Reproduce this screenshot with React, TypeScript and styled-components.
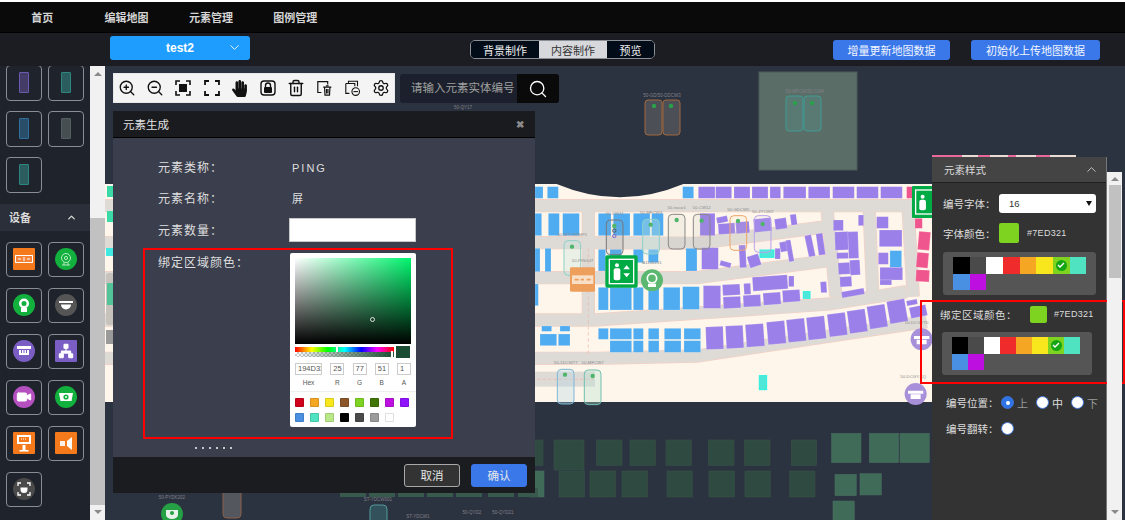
import { FC, ReactNode } from 'react';
import styled, { createGlobalStyle } from 'styled-components';
import { ChevronDown, ChevronUp, Search, Settings, Trash2, ZoomIn, ZoomOut, Network, Video } from 'lucide-react';
import { FaHandPaper } from 'react-icons/fa';

const GlobalStyle = createGlobalStyle`
    html, body {
        margin: 0;
        padding: 0;
        background: #fff;
        font-family: "Liberation Sans", "Noto Sans CJK SC", sans-serif;
    }
    * { box-sizing: border-box; }
`;

const Page = styled.div`
    width: 1125px;
    height: 520px;
    overflow: hidden;
    display: flex;
    flex-direction: column;
    border-top: 2px solid #fff;
`;

const TopNav = styled.nav`
    height: 31px;
    flex: none;
    display: flex;
    align-items: center;
    background: #0a0a0a;
    border-bottom: 1px solid #000;
`;

const NavItem = styled.div`
    width: 84.4px;
    text-align: center;
    font-size: 11px;
    font-weight: 700;
    color: #d4d4d4;
`;

const SubBar = styled.div`
    height: 33px;
    flex: none;
    display: flex;
    align-items: center;
    padding-left: 110px;
    background: #1b1d22;
`;

const MapSelect = styled.div`
    width: 140px;
    height: 24px;
    display: flex;
    align-items: center;
    justify-content: center;
    position: relative;
    margin-top: -3px;
    border-radius: 3px;
    background: #1e9dff;
    color: #fff;
    font-size: 12px;
    font-weight: 700;

    svg {
        position: absolute;
        right: 8px;
        top: 4px;
    }
`;

const ModeTabs = styled.div`
    display: flex;
    height: 19px;
    margin-left: 220px;
    border: 1px solid #8b8f96;
    border-radius: 5px;
    overflow: hidden;
`;

const ModeTab = styled.div<{ $active?: boolean; $width: number }>`
    width: ${p => p.$width}px;
    display: flex;
    align-items: center;
    justify-content: center;
    font-size: 11px;
    background: ${p => (p.$active ? '#d6d8dc' : '#020b18')};
    color: ${p => (p.$active ? '#333' : '#f0f0f0')};
`;

const BlueButton = styled.button<{ $width: number; $gap: number }>`
    width: ${p => p.$width}px;
    height: 20px;
    margin-left: ${p => p.$gap}px;
    padding: 0;
    border: 0;
    border-radius: 3px;
    background: #3a78ea;
    color: #f2f6ff;
    font-family: inherit;
    font-size: 11px;
`;

const Main = styled.div`
    flex: 1;
    min-height: 0;
    display: flex;
`;

const Sidebar = styled.aside`
    width: 90px;
    flex: none;
    overflow: hidden;
    background: #1f232c;
`;

const TileGrid = styled.div<{ $top: number }>`
    display: grid;
    grid-template-columns: 36px 36px;
    gap: 10.5px 6px;
    padding-left: 6px;
    margin-top: ${p => p.$top}px;
`;

const Tile = styled.div`
    width: 36px;
    height: 35.5px;
    display: flex;
    align-items: center;
    justify-content: center;
    border: 1px solid #8a8d93;
    border-radius: 4px;
`;

const PhoneChip = styled.div<{ $fill: string; $line: string }>`
    width: 10px;
    height: 21px;
    border-radius: 1px;
    background: ${p => p.$fill};
    border: 1px solid ${p => p.$line};
`;

const SideHeading = styled.div`
    height: 27px;
    margin-top: 11px;
    display: flex;
    align-items: center;
    justify-content: space-between;
    padding: 0 13px 0 9px;
    background: #2b2f3a;
    color: #d8d8d8;
    font-size: 11px;
    font-weight: 700;
`;

const Badge = styled.div<{ $color: string; $round?: boolean }>`
    width: 22px;
    height: 22px;
    display: flex;
    align-items: center;
    justify-content: center;
    background: ${p => p.$color};
    border-radius: ${p => (p.$round ? '50%' : '1px')};
`;

const ScrollTrack = styled.div<{ $width: number }>`
    width: ${p => p.$width}px;
    flex: none;
    display: flex;
    flex-direction: column;
    align-items: center;
    background: #f1f1f1;
`;

const ScrollArrow = styled.div<{ $down?: boolean }>`
    width: 0;
    height: 0;
    flex: none;
    border-left: 4px solid transparent;
    border-right: 4px solid transparent;
    ${p => (p.$down ? 'border-top: 4px solid #8a8a8a;' : 'border-bottom: 4px solid #8a8a8a;')}
`;

const ScrollThumb = styled.div<{ $height: number; $top: number }>`
    width: 100%;
    height: ${p => p.$height}px;
    margin-top: ${p => p.$top}px;
    flex: none;
    background: #c1c1c1;
`;

const Stage = styled.main`
    flex: 1;
    position: relative;
    overflow: hidden;
    background: #2c3340;
`;

const MapSvg = styled.svg`
    position: absolute;
    inset: 0;
    display: block;
`;

const Toolbar = styled.div`
    position: absolute;
    left: 8px;
    top: 7px;
    width: 282px;
    height: 30px;
    display: flex;
    align-items: center;
    justify-content: space-between;
    padding: 0 4px;
    background: #f4f4f4;
    border: 1px solid #e8e8e8;
    color: #111;
`;

const ToolIcon = styled.div`
    width: 18px;
    height: 18px;
    display: flex;
    align-items: center;
    justify-content: center;
`;

const SearchBox = styled.div`
    position: absolute;
    left: 295px;
    top: 8px;
    width: 159px;
    height: 29px;
    display: flex;
    border-radius: 3px;
    overflow: hidden;
    background: #1b202c;
`;

const SearchText = styled.div`
    flex: 1;
    padding-left: 11px;
    line-height: 29px;
    font-size: 11.5px;
    color: #a0a0a0;
    white-space: nowrap;
`;

const SearchButton = styled.div`
    width: 42px;
    display: flex;
    align-items: center;
    justify-content: center;
    background: #0a0a0a;
    color: #fff;
`;

const Modal = styled.section`
    position: absolute;
    left: 8px;
    top: 45px;
    width: 422px;
    height: 382px;
    display: flex;
    flex-direction: column;
    background: #3b3f4d;
`;

const ModalHead = styled.header`
    height: 27px;
    flex: none;
    display: flex;
    align-items: center;
    justify-content: space-between;
    padding: 0 11px 0 10px;
    background: #1a1b1e;
    border-bottom: 1px solid #000;
    color: #e2e2e2;
    font-size: 11.5px;
`;

const CloseMark = styled.span`
    color: #8a8a8a;
    font-size: 10px;
    font-weight: 700;
`;

const ModalBody = styled.div`
    flex: 1;
    min-height: 0;
    overflow: hidden;
    padding: 20px 0 0 45px;
    display: flex;
    flex-direction: column;
`;

const FormRow = styled.div<{ $height: number }>`
    display: flex;
    height: ${p => p.$height}px;
    flex: none;
    color: #dedede;
    font-size: 12px;
    letter-spacing: 1px;
    line-height: 20px;
`;

const FormLabel = styled.div`
    width: 131px;
    flex: none;
`;

const FormValue = styled.div`
    padding-left: 3px;
    font-size: 11px;
    letter-spacing: 2px;
`;

const TextField = styled.div`
    width: 127px;
    height: 24px;
    margin-top: -3px;
    background: #fff;
    border: 1px solid #c9c9c9;
`;

const Picker = styled.div`
    width: 126px;
    height: 174px;
    margin: 0 0 0 1px;
    padding: 5px;
    display: flex;
    flex-direction: column;
    background: #fff;
    border-radius: 2px;
    letter-spacing: 0;
    color: #333;
`;

const SatPanel = styled.div`
    height: 86px;
    flex: none;
    position: relative;
    background: linear-gradient(to top, #000, transparent), linear-gradient(to right, #fff, #00f56e);
`;

const SatDot = styled.div`
    position: absolute;
    left: 75px;
    top: 59px;
    width: 5px;
    height: 5px;
    border: 1px solid #ddd;
    border-radius: 50%;
`;

const SliderRow = styled.div`
    display: flex;
    gap: 2px;
    margin-top: 2px;
    height: 14px;
`;

const Sliders = styled.div`
    width: 99px;
    display: flex;
    flex-direction: column;
    justify-content: space-between;
    padding: 1px 0;
`;

const HueBar = styled.div`
    height: 5px;
    position: relative;
    background: linear-gradient(to right, #f00, #ff0 17%, #0f0 33%, #0ff 50%, #00f 67%, #f0f 83%, #f00);
`;

const SliderKnob = styled.div<{ $left: string }>`
    position: absolute;
    left: ${p => p.$left};
    top: -1px;
    width: 2px;
    height: 7px;
    background: #fff;
    box-shadow: 0 0 1px #888;
`;

const AlphaBar = styled.div`
    height: 5px;
    position: relative;
    background:
        linear-gradient(to right, rgba(26, 77, 51, 0), #1a4d33),
        repeating-conic-gradient(#ccc 0 25%, #fff 0 50%) 0 0 / 4px 4px;
`;

const ColorPreview = styled.div`
    width: 14px;
    background: #1a4d33;
`;

const ValueGrid = styled.div`
    display: grid;
    grid-template-columns: 27px 14px 14px 14px 14px;
    column-gap: 6px;
    justify-content: space-between;
    margin-top: 5px;
`;

const ValueCell = styled.div`
    display: flex;
    flex-direction: column;
    align-items: center;
    color: #555;
`;

const ValueInput = styled.div`
    width: 100%;
    height: 12px;
    padding-left: 2px;
    border: 1px solid #ccc;
    font-size: 7.5px;
    line-height: 10px;
    overflow: hidden;
`;

const ValueName = styled.div`
    margin-top: 3px;
    height: 10px;
    font-size: 6.5px;
    line-height: 10px;
`;

const PresetWrap = styled.div`
    margin: 3px -5px 0;
    padding: 6px 5px 0;
    border-top: 1px solid #eee;
    display: grid;
    grid-template-columns: repeat(8, 9px);
    gap: 6px;
`;

const Preset = styled.div<{ $color: string }>`
    width: 9px;
    height: 9px;
    border-radius: 1px;
    background: ${p => p.$color};
    box-shadow: inset 0 0 0 1px rgba(0, 0, 0, 0.12);
`;

// only the last pixels of a form row peek out above the footer in the reference
const PeekLine = styled.div`
    width: 40px;
    height: 2px;
    flex: none;
    margin: 4px 0 0 37px;
    background: repeating-linear-gradient(to right, #c8c8cc 0 2px, transparent 2px 7px);
`;

const ModalFoot = styled.footer`
    height: 36px;
    flex: none;
    display: flex;
    align-items: center;
    justify-content: flex-end;
    gap: 11px;
    padding-right: 8px;
    background: #1b1c20;
`;

const FootButton = styled.button<{ $primary?: boolean }>`
    width: 56px;
    height: 23px;
    padding: 0;
    border-radius: 3px;
    border: 1px solid ${p => (p.$primary ? '#3a78ea' : '#a8a8a8')};
    background: ${p => (p.$primary ? '#3a78ea' : '#333')};
    color: #e8e8e8;
    font-family: inherit;
    font-size: 11.5px;
`;

const MarkBox = styled.div<{ $left: number; $top: number; $width: number; $height: number }>`
    position: absolute;
    left: ${p => p.$left}px;
    top: ${p => p.$top}px;
    width: ${p => p.$width}px;
    height: ${p => p.$height}px;
    border: 2px solid #f00;
`;

const StylePanel = styled.aside`
    position: absolute;
    left: 827px;
    top: 91px;
    width: 175px;
    bottom: 0;
    background: #333;
    border-right: 1px solid #777;
    color: #ddd;
`;

const PanelHead = styled.header`
    height: 26px;
    display: flex;
    align-items: center;
    justify-content: space-between;
    padding: 0 7px 0 12px;
    background: #444;
    border-bottom: 1px solid #1f1f1f;
    font-size: 10.5px;
`;

const PanelSection = styled.div<{ $left: number; $top: number }>`
    padding: ${p => p.$top}px 10px 0 ${p => p.$left}px;
`;

const PanelRow = styled.div<{ $height?: number; $above?: number }>`
    display: flex;
    align-items: center;
    height: ${p => p.$height ?? 20}px;
    margin-top: ${p => p.$above ?? 0}px;
    font-size: 10.5px;
`;

const RowLabel = styled.div<{ $width: number; $track?: number }>`
    width: ${p => p.$width}px;
    flex: none;
    white-space: nowrap;
    letter-spacing: ${p => p.$track ?? 0}px;
`;

const SelectBox = styled.div`
    width: 97px;
    height: 19px;
    display: flex;
    align-items: center;
    justify-content: space-between;
    padding: 0 4px 0 10px;
    border-radius: 3px;
    background: #fff;
    color: #333;
    font-size: 9.5px;
`;

const SelectCaret = styled.div`
    width: 0;
    height: 0;
    border-left: 3.5px solid transparent;
    border-right: 3.5px solid transparent;
    border-top: 5px solid #111;
`;

const Swatch = styled.div<{ $size: number }>`
    width: ${p => p.$size}px;
    height: ${p => p.$size}px;
    flex: none;
    background: #7ed321;
    border-radius: 2px;
`;

const HexText = styled.div<{ $gap: number }>`
    margin-left: ${p => p.$gap}px;
    font-size: 9px;
    letter-spacing: 0.3px;
`;

const Palette = styled.div<{ $cell: number; $width: number; $shift: number }>`
    width: ${p => p.$width}px;
    height: 43px;
    margin: 9px 0 0 ${p => p.$shift}px;
    padding: 5px 10px;
    display: grid;
    grid-template-columns: repeat(8, ${p => p.$cell}px);
    grid-auto-rows: 16.5px;
    border-radius: 3px;
    background: #555;
`;

const PaletteCell = styled.div<{ $color: string }>`
    display: flex;
    align-items: center;
    justify-content: center;
    background: ${p => p.$color};
`;

const CheckDot = styled.div`
    width: 11px;
    height: 11px;
    display: flex;
    align-items: center;
    justify-content: center;
    border-radius: 50%;
    background: #14a514;
`;

const RadioDot = styled.div<{ $on?: boolean }>`
    width: 13px;
    height: 13px;
    flex: none;
    border-radius: 50%;
    background: ${p => (p.$on ? '#2f74e6' : '#fff')};
    border: 1px solid #3f73d6;
    display: flex;
    align-items: center;
    justify-content: center;

    &::after {
        content: '';
        width: 4px;
        height: 4px;
        border-radius: 50%;
        background: ${p => (p.$on ? '#fff' : 'transparent')};
    }
`;

const RadioText = styled.span<{ $dim?: boolean; $gap: number }>`
    margin: 0 ${p => p.$gap}px 0 3px;
    font-size: 11px;
    color: ${p => (p.$dim ? '#999' : '#ddd')};
`;

const RightScroll = styled(ScrollTrack)`
    position: absolute;
    left: 1002px;
    top: 106px;
    bottom: 0;
    padding-top: 5px;
    justify-content: flex-start;
`;

const RightThumb = styled(ScrollThumb)`
    width: 12px;
`;

const SideScroll = styled(ScrollTrack)`
    padding-top: 6px;
`;

const ScrollFill = styled.div`
    flex: 1;
`;

const BottomArrow = styled(ScrollArrow)`
    margin-bottom: 6px;
`;

// toolbar glyphs that lucide does not have
const ScanSquare = () => (
    <svg width='18' height='18' viewBox='0 0 18 18' fill='none' stroke='#111' strokeWidth='1.6'>
        <path d='M2 6V2h4M12 2h4v4M16 12v4h-4M6 16H2v-4' />
        <rect x='5' y='5' width='8' height='8' fill='#111' stroke='none' />
    </svg>
);

const FullCorners = () => (
    <svg width='18' height='18' viewBox='0 0 18 18' fill='none' stroke='#111' strokeWidth='1.8'>
        <path d='M2 6V2h4M12 2h4v4M16 12v4h-4M6 16H2v-4' />
    </svg>
);

const LockBox = () => (
    <svg width='18' height='18' viewBox='0 0 18 18' fill='none' stroke='#111' strokeWidth='1.4'>
        <rect x='2' y='2' width='14' height='14' rx='3' />
        <path d='M6.5 8V6.5a2.5 2.5 0 015 0V8' />
        <rect x='5' y='8' width='8' height='6' fill='#111' stroke='none' rx='1' />
    </svg>
);

const PageTrash = () => (
    <svg width='20' height='18' viewBox='0 0 20 18' fill='none' stroke='#111' strokeWidth='1.3'>
        <path d='M6 14H2V2h11v3' />
        <path d='M8 8h9M9.5 8l.5 9h5l.5-9M11 6.5h3M11.7 10v5M13.3 10v5' />
    </svg>
);

const PageMinus = () => (
    <svg width='20' height='18' viewBox='0 0 20 18' fill='none' stroke='#111' strokeWidth='1.2'>
        <path d='M5 4V1.5h10V7M2 4h10v3M2 4v11h4' />
        <circle cx='13' cy='13' r='4.2' />
        <path d='M10.5 13h5' />
    </svg>
);

const W = '#fff';

const deviceIcons: ReactNode[] = [
    <Badge $color='#f47a1c' key='card'>
        <svg width='22' height='22' viewBox='0 0 22 22' fill='none' stroke={W} strokeWidth='1'>
            <rect x='2.5' y='7.5' width='17' height='7' fill='#fbd' fillOpacity='0.15' />
            <path d='M5 11h3M10 10h2M10 12h2M14 11h3' />
        </svg>
    </Badge>,
    <Badge $color='#12b03d' $round key='cam1'>
        <svg width='22' height='22' viewBox='0 0 22 22' fill='none' stroke='#c8f0d0' strokeWidth='0.9'>
            <circle cx='11' cy='10' r='4.5' />
            <circle cx='11' cy='10' r='1.6' />
            <path d='M7 17h8M9 14.5v2.5M13 14.5v2.5' />
        </svg>
    </Badge>,
    <Badge $color='#12b03d' $round key='cam2'>
        <svg width='22' height='22' viewBox='0 0 22 22' fill={W}>
            <circle cx='11' cy='9.5' r='5' />
            <circle cx='11' cy='9.5' r='2.5' fill='#12b03d' />
            <rect x='8' y='14' width='6' height='4' />
        </svg>
    </Badge>,
    <Badge $color='#555' $round key='dome'>
        <svg width='22' height='22' viewBox='0 0 22 22' fill={W}>
            <rect x='4' y='7' width='14' height='2' />
            <path d='M6 10.5h10a5 5 0 01-10 0z' />
        </svg>
    </Badge>,
    <Badge $color='#7a5ec4' $round key='store'>
        <svg width='22' height='22' viewBox='0 0 22 22' fill={W}>
            <rect x='4' y='6' width='14' height='3' />
            <path d='M6 10h10v5H6z' />
            <path d='M8.5 10v3M11 10v3M13.5 10v3' stroke='#7a5ec4' />
        </svg>
    </Badge>,
    <Badge $color='#7a5ec4' key='network'>
        <Network size={16} color={W} fill={W} strokeWidth={1.6} />
    </Badge>,
    <Badge $color='#b550c0' $round key='video'>
        <Video size={16} color={W} fill={W} strokeWidth={1.5} />
    </Badge>,
    <Badge $color='#12b03d' $round key='cam3'>
        <svg width='22' height='22' viewBox='0 0 22 22' fill={W}>
            <path d='M4 7h14l-1.5 8h-11z' />
            <circle cx='11' cy='11' r='2.6' fill='#12b03d' />
            <circle cx='11' cy='11' r='1' />
        </svg>
    </Badge>,
    <Badge $color='#f47a1c' key='kiosk'>
        <svg width='22' height='22' viewBox='0 0 22 22' fill={W}>
            <path d='M4 3h14v9H4z' />
            <rect x='6' y='5' width='10' height='5' fill='#f47a1c' />
            <path d='M8 7h6' stroke={W} strokeDasharray='1 1' />
            <rect x='9.5' y='13' width='3' height='5' />
            <rect x='6.5' y='18' width='9' height='1.5' />
        </svg>
    </Badge>,
    <Badge $color='#f47a1c' key='speaker'>
        <svg width='22' height='22' viewBox='0 0 22 22' fill={W}>
            <rect x='5' y='9' width='5' height='5' opacity='0.9' />
            <path d='M12 9l5-4v13l-5-4z' />
        </svg>
    </Badge>,
    <Badge $color='#4a4a4a' $round key='scan'>
        <svg width='22' height='22' viewBox='0 0 22 22' fill='none' stroke={W} strokeWidth='1.3'>
            <path d='M5 8V5h3M14 5h3v3M17 14v3h-3M8 17H5v-3' />
            <path d='M7.5 9.5h7v2a3.5 3.5 0 01-7 0z' fill={W} stroke='none' />
        </svg>
    </Badge>,
];

type Block = [number, number, number, number, number?];

const blueBlocks: Block[] = [
    [15, 20, 24, 35], [52, 20, 33, 35], [458, 20, 33, 35],
    [15, 100, 20, 67], [55, 100, 33, 67], [98, 100, 50, 67], [205, 100, 38, 67], [250, 100, 50, 67], [310, 100, 50, 67], [365, 100, 35, 67],
    [15, 205, 15, 70], [45, 205, 18, 70], [205, 208, 22, 65], [240, 208, 35, 40], [310, 208, 30, 40], [355, 208, 30, 40], [468, 205, 33, 68],
    [15, 312, 10, 65], [205, 322, 30, 68], [240, 322, 65, 68], [310, 322, 30, 68], [355, 322, 32, 68], [400, 322, 50, 68], [458, 320, 50, 68],
    [205, 445, 30, 33], [240, 445, 65, 33], [310, 445, 30, 33], [355, 445, 32, 33], [403, 445, 50, 33], [462, 445, 50, 33],
    [240, 482, 65, 35], [310, 482, 30, 35], [355, 482, 32, 35], [403, 482, 50, 35], [462, 482, 50, 35],
    [35, 438, 30, 16], [90, 438, 30, 16], [30, 462, 50, 35], [85, 462, 35, 35], [1080, 212, 35, 50],
];

const purpleBlocks: Block[] = [
    [505, 20, 50, 35], [557, 20, 48, 35], [612, 20, 48, 35], [666, 20, 48, 35], [720, 20, 32, 35], [760, 20, 68, 35], [835, 20, 65, 35], [908, 20, 65, 35], [980, 20, 65, 35], [1052, 20, 65, 35],
    [510, 100, 45, 67], [560, 110, 33, 18, -12], [565, 130, 50, 32, -4], [618, 125, 40, 35, -4], [672, 115, 52, 40, -6], [735, 115, 35, 32, -8], [782, 103, 18, 32, -8],
    [515, 203, 50, 65], [570, 245, 33, 15, 15], [628, 195, 20, 68, -3], [655, 225, 35, 35, -18], [735, 205, 16, 32], [750, 185, 25, 30, -10], [772, 180, 15, 65, -10], [830, 165, 20, 65, -12], [862, 160, 20, 65, -8],
    [520, 317, 52, 68], [578, 313, 52, 33, -3], [580, 350, 52, 35, -3], [642, 310, 20, 33, -3], [640, 345, 52, 35, -3], [668, 288, 105, 42, -4], [776, 288, 16, 32], [700, 338, 52, 36, -4], [758, 330, 52, 36, -4], [872, 305, 18, 33, -4],
    [910, 120, 30, 32], [985, 105, 16, 32], [915, 155, 40, 55, -2], [955, 155, 30, 80, -2], [920, 218, 35, 18, -2], [925, 248, 35, 35, -3], [960, 240, 30, 45, -3], [930, 290, 35, 30, -3], [935, 330, 68, 18, -10],
    [1040, 110, 35, 35], [1048, 150, 68, 50], [1045, 218, 30, 35], [1050, 262, 68, 38], [1050, 300, 35, 15],
    [528, 440, 52, 68, -2], [588, 437, 52, 68, -3], [648, 432, 54, 68, -4], [712, 424, 54, 68, -5], [772, 417, 54, 68, -6], [832, 410, 54, 68, -6], [895, 400, 54, 68, -7], [955, 390, 54, 68, -8], [1015, 376, 54, 68, -9], [1075, 360, 54, 68, -10],
    [1130, 360, 32, 15, -10], [1140, 378, 50, 33, -12],
];

const pinkBlocks: Block[] = [
    [1130, 20, 20, 35], [1155, 115, 22, 30], [1165, 155, 35, 55, 5], [1160, 218, 35, 45, 5], [1158, 270, 40, 35, 3],
];

type Pod = { x: number; y: number; h?: number; line: string; fill: string; dot: [number, number]; label: string; ly: number };

const pods: Pod[] = [
    { x: 229, y: 120, line: '#777', fill: 'rgba(150,150,150,.12)', dot: [253, 138], label: '50-CW11', ly: 105 },
    { x: 338, y: 118, line: '#8fd0c8', fill: 'rgba(190,225,220,.35)', dot: [362, 134], label: '50-MFCW4', ly: 103 },
    { x: 415, y: 103, line: '#888', fill: 'rgba(170,170,170,.12)', dot: [440, 120], label: '50-nxcw1', ly: 88 },
    { x: 490, y: 103, line: '#888', fill: 'rgba(170,170,170,.12)', dot: [515, 122], label: '50-CW12', ly: 88 },
    { x: 600, y: 107, line: '#eda56a', fill: 'rgba(240,220,190,.12)', dot: [624, 123], label: '50-GDCW5', ly: 92 },
    { x: 673, y: 107, h: 110, line: '#b9a0ea', fill: 'rgba(220,210,240,.12)', dot: [698, 132], label: '50-ZYCW2', ly: 100 },
    { x: 102, y: 182, line: '#8fd0c8', fill: 'rgba(190,225,220,.3)', dot: [126, 200], label: '50-MTCW/MP1', ly: 167 },
    { x: 82, y: 568, line: '#7cb8d8', fill: 'rgba(180,215,230,.35)', dot: [105, 584], label: '50-1DCW77', ly: 552 },
    { x: 163, y: 570, line: '#6fc0b0', fill: 'rgba(180,225,210,.35)', dot: [188, 588], label: '50-MFCW7', ly: 553 },
];

const mapLabels: [number, number, string][] = [
    [158, 245, '50-PING37'], [366, 252, 'A1106231'], [1160, 431, '50-DCGYT0'], [1150, 594, '50-DCGY.CQ'],
];

const squaresDark: Block[] = [
    [15, 120, 24, 76], [72, 120, 90, 90], [200, 120, 76, 76], [300, 120, 76, 76], [408, 120, 76, 76], [536, 120, 76, 76], [644, 120, 76, 76], [784, 120, 76, 76],
    [87, 213, 76, 78], [180, 213, 76, 78], [276, 213, 76, 78], [411, 213, 76, 78], [537, 213, 76, 78], [645, 213, 76, 78], [779, 213, 76, 78],
];

const squaresLight: Block[] = [
    [0, 213, 42, 78], [905, 100, 88, 88], [1018, 100, 88, 88], [1110, 100, 88, 88], [915, 223, 64, 64], [990, 221, 64, 64], [909, 303, 64, 60],
];

const roads = [
    'M-1300 77H1210',
    'M-1300 188H195L500 190L890 140',
    'M-1300 293H500L890 243',
    'M-1300 420H195L900 372L1130 335',
    'M-1300 535H195L500 528L1190 425',
    'M175 77V420',
    'M892 95L918 350',
    'M1018 95L1028 335',
    'M1135 95L1150 350',
];

const BlockSet: FC<{ items: Block[]; fill: string; line?: string }> = ({ items, fill, line = 'rgba(255,255,255,.35)' }) => (
    <g fill={fill} stroke={line} strokeWidth='1.5'>
        {items.map(([x, y, w, h, r], i) => (
            <rect
                key={i}
                x={x}
                y={y}
                width={w}
                height={h}
                transform={r ? `rotate(${r} ${x + w / 2} ${y + h / 2})` : undefined}
            />
        ))}
    </g>
);

// the floor plan lies on a free canvas, drawn in page coordinates
const FloorMap = () => (
    <MapSvg width='1020' height='454' viewBox='105 66 1020 454'>
        <rect x='932' y='155' width='144' height='3' fill='#e8dcd4' />
        <g fill='#e8689a'>
            <rect x='932' y='155' width='30' height='3' />
            <rect x='978' y='155' width='12' height='3' />
            <rect x='1008' y='155' width='8' height='3' />
            <rect x='1036' y='155' width='14' height='3' />
        </g>
        <rect x='105' y='184' width='1012' height='218' fill='#fef6ea' />
        <g transform='translate(530 180) scale(0.3333)' fontFamily='"Liberation Sans", sans-serif'>
            <g fill='none'>
                {roads.map(d => (
                    <path key={'e' + d} d={d} stroke='#f6cfc4' strokeWidth='40' />
                ))}
                {roads.map(d => (
                    <path key={d} d={d} stroke='#dedbd6' strokeWidth='36' />
                ))}
            </g>
            <rect x='15' y='575' width='180' height='45' fill='#dedbd6' />
            <path d='M22 598H195' stroke='#f2b0a8' strokeWidth='2' strokeDasharray='10 6' />
            <path d='M175 205V520' stroke='#f2b0a8' strokeWidth='2' strokeDasharray='10 8' />
            <path d='M80 12Q270 92 460 12Z' fill='#2c3340' />
            <BlockSet items={blueBlocks} fill='#50acf0' />
            <BlockSet items={purpleBlocks} fill='#9a80e8' />
            <BlockSet items={pinkBlocks} fill='#f0568e' />
            <g fill='#4fe8d8' stroke='#25f0e0' strokeWidth='3'>
                <rect x='690' y='210' width='42' height='22' />
                <rect x='820' y='335' width='20' height='20' />
                <rect x='688' y='587' width='22' height='42' />
            </g>
            {pods.map(p => (
                <g key={p.label}>
                    <rect x={p.x} y={p.y} width='50' height={p.h ?? 104} rx='12' fill={p.fill} stroke={p.line} strokeWidth='3' />
                    <circle cx={p.dot[0]} cy={p.dot[1]} r='6.5' fill='#4eb56a' />
                    <text x={p.x + 25} y={p.ly} fontSize='13' fill='#8c8c8c' textAnchor='middle'>
                        {p.label}
                    </text>
                </g>
            ))}
            <circle cx='253' cy='152' r='5' fill='none' stroke='#555' strokeWidth='3' />
            <circle cx='253' cy='168' r='5' fill='none' stroke='#7766c8' strokeWidth='3' />
            <rect x='120' y='262' width='75' height='73' rx='4' fill='#ee9f5c' />
            <rect x='126' y='286' width='64' height='26' fill='#f8e0c8' />
            <path d='M134 299h12M152 299h10M170 299h12' stroke='#ee9f5c' strokeWidth='5' />
            <rect x='226' y='226' width='97' height='97' rx='6' fill='#00aa44' />
            <rect x='238' y='238' width='73' height='73' fill='none' stroke='#fff' strokeWidth='4' />
            <circle cx='261' cy='256' r='6' fill='#fff' />
            <rect x='251' y='265' width='20' height='36' rx='6' fill='#fff' />
            <path d='M280 268l10-12 10 12zM280 280l10 12 10-12z' fill='#fff' />
            <circle cx='366' cy='301' r='33' fill='#5cb870' />
            <circle cx='366' cy='295' r='14' fill='none' stroke='#fff' strokeWidth='5' />
            <rect x='354' y='311' width='24' height='10' fill='#fff' />
            <rect x='1146' y='18' width='80' height='96' rx='4' fill='#00aa44' />
            <rect x='1157' y='30' width='60' height='72' fill='none' stroke='#fff' strokeWidth='4' />
            <circle cx='1178' cy='50' r='6' fill='#fff' />
            <rect x='1168' y='59' width='20' height='32' rx='6' fill='#fff' />
            <circle cx='1175' cy='478' r='33' fill='#a88fd9' />
            <circle cx='1157' cy='642' r='33' fill='#a88fd9' />
            <path d='M1152 468h46v9h-46zM1160 479h30v14h-30zM1134 632h46v9h-46zM1142 643h30v14h-30z' fill='#fff' />
            {mapLabels.map(([x, y, t]) => (
                <text key={t} x={x} y={y} fontSize='13' fill='#8c8c8c' textAnchor='middle'>
                    {t}
                </text>
            ))}
        </g>
        <g fill='#3bd8a8'>
            <rect x='107' y='186' width='7' height='11' />
            <rect x='107' y='211' width='7' height='11' />
        </g>
        <rect x='106' y='248' width='8' height='8' fill='#3fe8e0' />
        <rect x='106' y='273' width='8' height='52' rx='3' fill='#c8c2bc' />
        <rect x='107' y='283' width='7' height='22' fill='#53c49a' />
        <rect x='106' y='330' width='8' height='14' fill='#9a9a9a' />
        <g transform='translate(530 400) scale(0.3333)'>
            <BlockSet items={squaresDark} fill='#2f4a40' line='#3a5549' />
            <BlockSet items={squaresLight} fill='#406b58' line='#4a7060' />
        </g>
        <g fill='#375a4c'>
            <rect x='340' y='488' width='26' height='9' />
            <rect x='369' y='488' width='26' height='9' />
            <rect x='398' y='488' width='26' height='9' />
            <rect x='427' y='488' width='26' height='9' />
            <rect x='456' y='488' width='26' height='9' />
            <rect x='488' y='488' width='26' height='9' />
            <rect x='518' y='488' width='20' height='9' />
        </g>
        <circle cx='172' cy='514' r='11' fill='#25a044' />
        <path d='M166 510h12v5a6 4 0 01-12 0z' fill='#e8f2ea' />
        <circle cx='172' cy='513' r='2' fill='#25a044' />
        <rect x='223' y='488' width='18' height='30' rx='4' fill='#55575e' stroke='#8a5f48' />
        <rect x='370' y='505' width='17' height='25' rx='4' fill='#33515a' stroke='#4f9a9a' />
        <g fontSize='4.5' fill='#808088' fontFamily='"Liberation Sans", sans-serif' textAnchor='middle'>
            <text x='172' y='499'>50-PYDK202</text>
            <text x='378' y='501'>ST-YDCW001</text>
            <text x='418' y='518'>ST-YDCW1</text>
            <text x='472' y='514'>50-QYD2</text>
            <text x='503' y='514'>50-QYD21</text>
            <text x='463' y='109'>50-QY17</text>
            <text x='662' y='97'>50-GD/50-DDCW3</text>
        </g>
        <rect x='759' y='72' width='98' height='98' fill='#5a6d66' stroke='#4c5b59' />
        <text x='805' y='93' fontSize='4.5' fill='#808088' fontFamily='"Liberation Sans", sans-serif' textAnchor='middle'>
            50-MFCW/50-CWA
        </text>
        <g stroke='#a0683f' strokeWidth='1' fill='#4d4f56'>
            <rect x='645' y='100' width='17' height='35' rx='3' />
            <rect x='663' y='100' width='17' height='35' rx='3' />
        </g>
        <g stroke='#3f9c94' strokeWidth='1' fill='#587a73'>
            <rect x='786' y='96' width='17' height='35' rx='3' />
            <rect x='804' y='96' width='17' height='35' rx='3' />
        </g>
        <g fill='#2aa04a'>
            <circle cx='654' cy='106' r='2.2' />
            <circle cx='671' cy='106' r='2.2' />
            <circle cx='795' cy='103' r='2.2' />
            <circle cx='812' cy='103' r='2.2' />
        </g>
    </MapSvg>
);

const pickerPresets = ['#d0021b', '#f5a623', '#f8e71c', '#8b572a', '#7ed321', '#417505', '#bd10e0', '#9013fe', '#4a90e2', '#50e3c2', '#b8e986', '#000000', '#4a4a4a', '#9b9b9b', '#ffffff'];
const paletteColors = ['#000000', '#4a4a4a', '#ffffff', '#f02b2b', '#f5a623', '#f8e71c', '#7ed321', '#50e3c2', '#4a90e2', '#bd10e0'];

const ColorPalette: FC<{ cell: number; width: number; shift?: number }> = ({ cell, width, shift = 0 }) => (
    <Palette $cell={cell} $width={width} $shift={shift}>
        {paletteColors.map(c => (
            <PaletteCell key={c} $color={c}>
                {c === '#7ed321' && (
                    <CheckDot>
                        <svg width='8' height='8' viewBox='0 0 8 8' fill='none' stroke='#fff' strokeWidth='1.4'>
                            <path d='M1 4l2 2 4-4' />
                        </svg>
                    </CheckDot>
                )}
            </PaletteCell>
        ))}
    </Palette>
);

const ColorPicker = () => (
    <Picker>
        <SatPanel>
            <SatDot />
        </SatPanel>
        <SliderRow>
            <Sliders>
                <HueBar>
                    <SliderKnob $left='41%' />
                </HueBar>
                <AlphaBar>
                    <SliderKnob $left='97%' />
                </AlphaBar>
            </Sliders>
            <ColorPreview />
        </SliderRow>
        <ValueGrid>
            {[['194D33', 'Hex'], ['25', 'R'], ['77', 'G'], ['51', 'B'], ['1', 'A']].map(([v, n]) => (
                <ValueCell key={n}>
                    <ValueInput>{v}</ValueInput>
                    <ValueName>{n}</ValueName>
                </ValueCell>
            ))}
        </ValueGrid>
        <PresetWrap>
            {pickerPresets.map(c => (
                <Preset key={c} $color={c} />
            ))}
        </PresetWrap>
    </Picker>
);

const App: FC = () => {
    return (
        <Page>
            <GlobalStyle />
            <TopNav>
                <NavItem>首页</NavItem>
                <NavItem>编辑地图</NavItem>
                <NavItem>元素管理</NavItem>
                <NavItem>图例管理</NavItem>
            </TopNav>
            <SubBar>
                <MapSelect>
                    test2
                    <ChevronDown size={15} strokeWidth={1.4} />
                </MapSelect>
                <ModeTabs>
                    <ModeTab $width={68}>背景制作</ModeTab>
                    <ModeTab $width={68} $active>内容制作</ModeTab>
                    <ModeTab $width={47}>预览</ModeTab>
                </ModeTabs>
                <BlueButton $width={117} $gap={178}>增量更新地图数据</BlueButton>
                <BlueButton $width={129} $gap={21}>初始化上传地图数据</BlueButton>
            </SubBar>
            <Main>
                <Sidebar>
                    <TileGrid $top={-1}>
                        <Tile><PhoneChip $fill='#443c66' $line='#6b5bb0' /></Tile>
                        <Tile><PhoneChip $fill='#2b5d5e' $line='#2f8580' /></Tile>
                        <Tile><PhoneChip $fill='#2a4d6a' $line='#2e6f9c' /></Tile>
                        <Tile><PhoneChip $fill='#454e50' $line='#555e60' /></Tile>
                        <Tile><PhoneChip $fill='#2b5d5e' $line='#2f8580' /></Tile>
                    </TileGrid>
                    <SideHeading>
                        设备
                        <ChevronUp size={11} strokeWidth={3} />
                    </SideHeading>
                    <TileGrid $top={11}>
                        {deviceIcons.map((icon, i) => (
                            <Tile key={i}>{icon}</Tile>
                        ))}
                    </TileGrid>
                </Sidebar>
                <SideScroll $width={15}>
                    <ScrollArrow />
                    <ScrollThumb $height={287} $top={142} />
                    <ScrollFill />
                    <BottomArrow $down />
                </SideScroll>
                <Stage>
                    <FloorMap />
                    <Toolbar>
                        <ToolIcon><ZoomIn size={18} strokeWidth={1.8} /></ToolIcon>
                        <ToolIcon><ZoomOut size={18} strokeWidth={1.8} /></ToolIcon>
                        <ToolIcon><ScanSquare /></ToolIcon>
                        <ToolIcon><FullCorners /></ToolIcon>
                        <ToolIcon><FaHandPaper size={17} /></ToolIcon>
                        <ToolIcon><LockBox /></ToolIcon>
                        <ToolIcon><Trash2 size={18} strokeWidth={1.9} /></ToolIcon>
                        <ToolIcon><PageTrash /></ToolIcon>
                        <ToolIcon><PageMinus /></ToolIcon>
                        <ToolIcon><Settings size={18} strokeWidth={1.7} /></ToolIcon>
                    </Toolbar>
                    <SearchBox>
                        <SearchText>请输入元素实体编号</SearchText>
                        <SearchButton><Search size={20} strokeWidth={1.6} /></SearchButton>
                    </SearchBox>
                    <Modal>
                        <ModalHead>
                            元素生成
                            <CloseMark>✖</CloseMark>
                        </ModalHead>
                        <ModalBody>
                            <FormRow $height={31}>
                                <FormLabel>元素类称：</FormLabel>
                                <FormValue>PING</FormValue>
                            </FormRow>
                            <FormRow $height={32}>
                                <FormLabel>元素名称：</FormLabel>
                                <FormValue>屏</FormValue>
                            </FormRow>
                            <FormRow $height={32}>
                                <FormLabel>元素数量：</FormLabel>
                                <TextField />
                            </FormRow>
                            <FormRow $height={190}>
                                <FormLabel>绑定区域颜色：</FormLabel>
                                <ColorPicker />
                            </FormRow>
                            <PeekLine />
                        </ModalBody>
                        <ModalFoot>
                            <FootButton>取消</FootButton>
                            <FootButton $primary>确认</FootButton>
                        </ModalFoot>
                    </Modal>
                    <MarkBox $left={38} $top={182} $width={310} $height={191} />
                    <StylePanel>
                        <PanelHead>
                            元素样式
                            <ChevronUp size={15} strokeWidth={1.3} />
                        </PanelHead>
                        <PanelSection $left={11} $top={10}>
                            <PanelRow>
                                <RowLabel $width={56}>编号字体：</RowLabel>
                                <SelectBox>
                                    16
                                    <SelectCaret />
                                </SelectBox>
                            </PanelRow>
                            <PanelRow $above={10}>
                                <RowLabel $width={56}>字体颜色：</RowLabel>
                                <Swatch $size={20} />
                                <HexText $gap={8}>#7ED321</HexText>
                            </PanelRow>
                            <ColorPalette cell={16.67} width={153} />
                        </PanelSection>
                        <PanelSection $left={8} $top={10}>
                            <PanelRow $height={18}>
                                <RowLabel $width={90} $track={0.5}>绑定区域颜色：</RowLabel>
                                <Swatch $size={17} />
                                <HexText $gap={7}>#7ED321</HexText>
                            </PanelRow>
                            <ColorPalette cell={16} width={150} shift={2} />
                        </PanelSection>
                        <PanelSection $left={14} $top={20}>
                            <PanelRow $height={15}>
                                <RowLabel $width={55}>编号位置：</RowLabel>
                                <RadioDot $on />
                                <RadioText $dim $gap={8}>上</RadioText>
                                <RadioDot />
                                <RadioText $gap={8}>中</RadioText>
                                <RadioDot />
                                <RadioText $dim $gap={0}>下</RadioText>
                            </PanelRow>
                            <PanelRow $height={36}>
                                <RowLabel $width={55}>编号翻转：</RowLabel>
                                <RadioDot />
                            </PanelRow>
                        </PanelSection>
                    </StylePanel>
                    <MarkBox $left={815} $top={234} $width={205} $height={84} />
                    <RightScroll $width={15}>
                        <ScrollArrow />
                        <RightThumb $height={93} $top={4} />
                        <ScrollFill />
                        <BottomArrow $down />
                    </RightScroll>
                </Stage>
            </Main>
        </Page>
    );
};

export default App;
